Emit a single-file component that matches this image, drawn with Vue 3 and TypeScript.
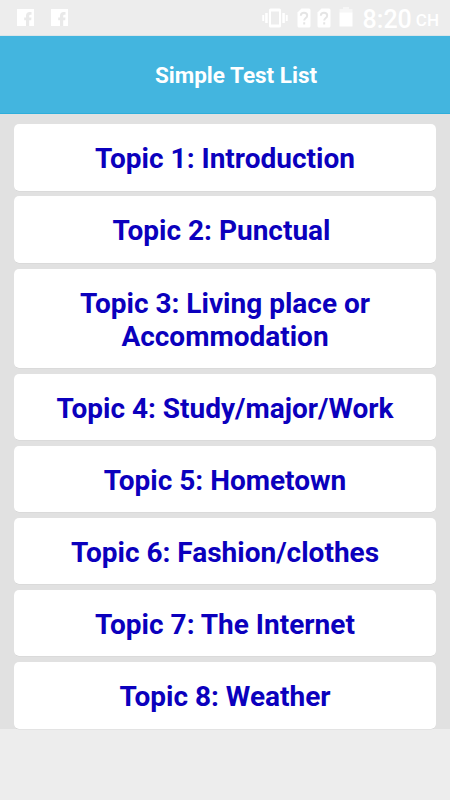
<script setup lang="ts">
interface Topic {
  id: number
  title: string
}

const topics: Topic[] = [
  'Introduction',
  'Punctual\u00a0',
  'Living place or Accommodation',
  'Study/major/Work',
  'Hometown',
  'Fashion/clothes',
  'The Internet',
  'Weather',
].map((title, index) => ({ id: index + 1, title }))
</script>

<template>
  <div class="screen">
    <div class="status">
      <div class="notifications">
        <svg v-for="n in 2" :key="n" class="fb" viewBox="0 0 17 17">
          <path d="M0 0H17V17H0Z" />
          <path class="letter" d="M9 17V11.2H7.2V8.4H9V6.8Q9 3 12.7 3H14.5V5.7H13.2Q12.2 5.7 12.2 7V8.4H14.5L14.2 11.2H12.2V17Z" />
        </svg>
      </div>
      <div class="indicators">
        <svg class="vibrate" viewBox="0 0 26 20">
          <path fill-rule="evenodd" d="M8.5 .5H17.5Q19 .5 19 2V18Q19 19.5 17.5 19.5H8.5Q7 19.5 7 18V2Q7 .5 8.5 .5ZM9 3.5V16.5H17V3.5ZM3.2 5H5.7V15H3.2ZM20.3 5H22.8V15H20.3ZM.3 7H2.2V13H.3ZM23.8 7H25.7V13H23.8Z" />
        </svg>
        <svg v-for="n in 2" :key="n" class="sim" viewBox="0 0 14 20">
          <path d="M4.5 .5H12Q13.5 .5 13.5 2V18Q13.5 19.5 12 19.5H2Q.5 19.5 .5 18V4.5Z" />
          <path class="question" d="M3.8 7.7Q3.8 4.8 7 4.8Q10.2 4.8 10.2 7.5Q10.2 9 8.5 10.2Q7.2 11.2 7.2 12.5M7.2 14.3V16.5" />
        </svg>
        <svg class="battery" viewBox="0 0 14 20">
          <path class="empty" d="M4 0H10V2H13.5V6H.5V2H4Z" />
          <path d="M.5 5.5H13.5V19.5H.5Z" />
        </svg>
        <span class="time">8:20</span><span class="period">CH</span>
      </div>
    </div>
    <header class="header">Simple Test List</header>
    <main class="list">
      <div v-for="topic in topics" :key="topic.id" class="card">
        <span class="label">Topic {{ topic.id }}: {{ topic.title }}</span>
      </div>
    </main>
  </div>
</template>

<style>
body {
  background: #ededed;
}
</style>

<style scoped>
.screen {
  width: 450px;
  height: 800px;
  overflow: hidden;
  background: #ededed;
  font-family: Roboto, sans-serif;
}

.status {
  display: flex;
  justify-content: space-between;
  box-sizing: border-box;
  height: 36px;
  padding: 0 11px 0 17px;
  color: #fff;
  border-bottom: 1px solid #dbe5e8;
}

.status svg {
  display: block;
  fill: #fff;
}

.notifications {
  display: flex;
  gap: 17px;
  padding-top: 9px;
}

.fb {
  width: 17px;
  height: 17px;
}

.status .fb .letter {
  fill: #e9e9e9;
}

.indicators {
  display: flex;
  align-items: flex-start;
  padding-top: 8px;
}

.vibrate {
  width: 26px;
  height: 20px;
  margin-right: 9px;
}

.sim {
  width: 14px;
  height: 20px;
  margin-right: 6px;
}

.status .sim .question {
  fill: none;
  stroke: #e5e5e5;
  stroke-width: 2;
}

.battery {
  width: 14px;
  height: 20px;
  margin: -1px 10px 0 2px;
}

.status .battery .empty {
  fill: #f6f6f6;
}

.time {
  font-size: 25px;
  font-weight: 500;
  line-height: 23px;
}

.period {
  margin-left: 4px;
  font-size: 17px;
  font-weight: 500;
  line-height: 25px;
}

.header {
  box-sizing: border-box;
  height: 78px;
  padding-left: 22px;
  border-bottom: 1px solid #2eaedb;
  background: #43b5df;
  color: #fff;
  font-size: 22.5px;
  font-weight: 700;
  line-height: 79px;
  text-align: center;
}

.list {
  display: flex;
  flex-direction: column;
  gap: 5.6px;
  padding: 10.4px 14px 0.6px;
  background: #e1e1e1;
}

.card {
  box-sizing: border-box;
  padding: 18px 40px 15.5px;
  border-radius: 5px;
  background: #fff;
  box-shadow: 0 0.5px 0 -0.2px #c6c6c6;
  color: #0b00bd;
  font-size: 28px;
  font-weight: 700;
  line-height: 33px;
  text-align: center;
}
</style>
